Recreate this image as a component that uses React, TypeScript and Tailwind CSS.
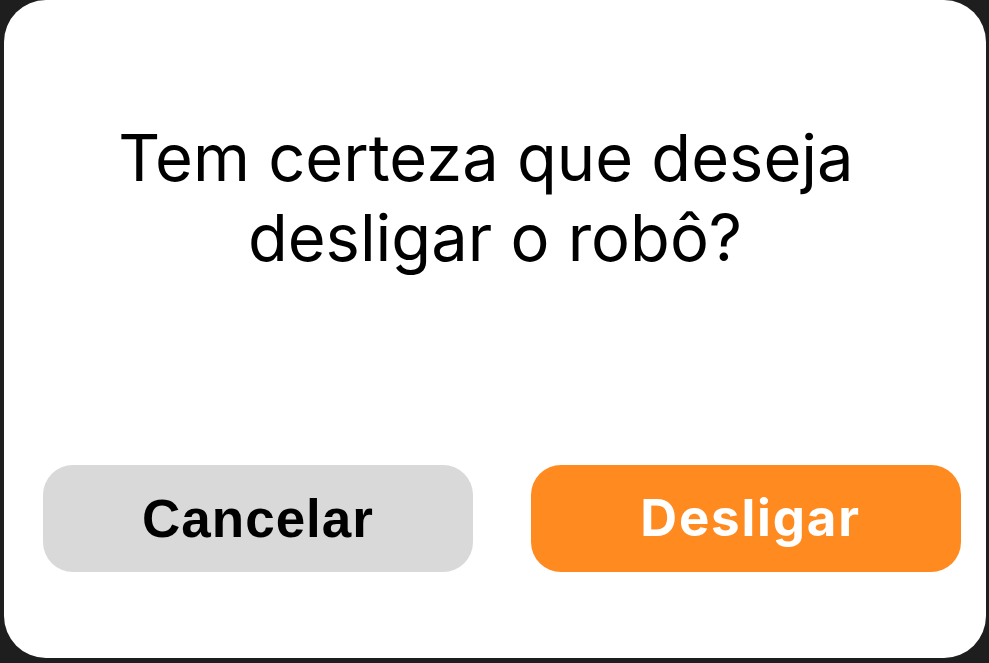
export default function App() {
  return (
    <div className="w-[989px] h-[663px] bg-[#1e1e1e] overflow-hidden">
      <div className="ml-[4px] w-[982px] h-[658px] bg-white rounded-[42px] flex flex-col">
        <div className="pt-[118px] text-center text-black text-[65px] leading-[80px] font-['Inter',sans-serif] font-normal">
          <div>{"Tem certeza que deseja\u00A0"}</div>
          <div>desligar o robô?</div>
        </div>
        <div className="mt-[187px] pl-[39px] pr-[25px] flex gap-[58px]">
          <button className="w-[430px] h-[107px] rounded-[30px] bg-[#d9d9d9] text-black text-[53px] tracking-[1px] font-bold font-['Liberation_Sans',Arial,sans-serif] flex items-center justify-center">
            Cancelar
          </button>
          <button className="w-[430px] h-[107px] pl-[9px] rounded-[30px] bg-[#ff8b20] text-white text-[51px] tracking-[1.8px] font-bold font-['Inter',sans-serif] flex items-center justify-center">
            Desligar
          </button>
        </div>
      </div>
    </div>
  );
}
